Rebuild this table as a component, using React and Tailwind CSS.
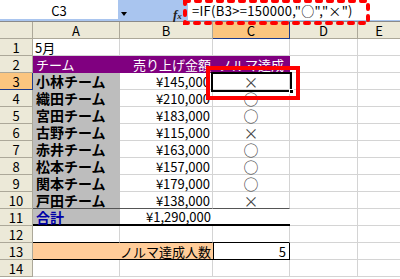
const teams = [
  ['小林チーム', '¥145,000', '×'],
  ['織田チーム', '¥210,000', '○'],
  ['宮田チーム', '¥183,000', '○'],
  ['古野チーム', '¥115,000', '×'],
  ['赤井チーム', '¥163,000', '○'],
  ['松本チーム', '¥157,000', '○'],
  ['関本チーム', '¥179,000', '○'],
  ['戸田チーム', '¥138,000', '×'],
];

const RowHead = ({ n, active }) => (
  <div
    className={`w-[33px] shrink-0 h-full flex items-center justify-center border-r border-b text-[13px] ${
      active ? 'bg-[#fbc57f] border-[#1c3a8c]' : 'bg-[#ece9d8] border-[#aca899]'
    }`}
  >
    {n}
  </div>
);

// plain empty D / E cells
const Tail = () => (
  <>
    <div className="w-[68px] shrink-0 h-full border-r border-b border-[#d4d4d4]" />
    <div className="flex-1 h-full border-b border-[#d4d4d4]" />
  </>
);

const App = () => {
  return (
    <div className="relative w-[400px] h-[279px] overflow-hidden bg-white text-black font-['Noto_Sans_CJK_JP',sans-serif] leading-none">
      {/* formula bar */}
      <div className="h-[22px] flex items-start bg-[#a9c5ef] border-b border-[#8a8a8a]">
        <div className="w-[118px] h-[19px] bg-white flex items-center justify-center text-[13px] pt-[2px]">C3</div>
        <div className="w-[70px] h-full flex items-start pt-[12px]">
          <div className="ml-[3px] w-0 h-0 border-x-[3.5px] border-x-transparent border-t-[4px] border-t-black" />
          <div className="ml-[46px] -mt-[4px] font-['Liberation_Serif',serif] italic font-bold text-[13px] text-[#222]">
            f<span className="text-[9px]">x</span>
          </div>
        </div>
        <div className="flex-1 h-[20px] bg-white flex items-center pl-[4px] text-[13px] tracking-[0.3px] pt-[1px]">
          =IF(B3&gt;=150000,"○","×")
        </div>
      </div>

      {/* column headers */}
      <div className="flex h-[17px] text-[13px]">
        <div className="w-[33px] shrink-0 h-full bg-[#ece9d8] border-r border-b border-[#aca899]" />
        <div className="w-[87px] shrink-0 h-full bg-[#ece9d8] border-r border-b border-[#aca899] flex items-center justify-center">A</div>
        <div className="w-[93px] shrink-0 h-full bg-[#ece9d8] border-r border-b border-[#aca899] flex items-center justify-center">B</div>
        <div className="w-[77px] shrink-0 h-full bg-[#fbc57f] border-r border-b border-[#1c3a8c] flex items-center justify-center">C</div>
        <div className="w-[68px] shrink-0 h-full bg-[#ece9d8] border-r border-b border-[#aca899] flex items-center justify-center">D</div>
        <div className="flex-1 h-full bg-[#ece9d8] border-b border-[#aca899] flex items-center justify-center">E</div>
      </div>

      {/* row 1 */}
      <div className="flex h-[17px]">
        <RowHead n={1} />
        <div className="w-[87px] shrink-0 h-full border-r border-b border-[#d4d4d4] flex items-center pl-[2px] text-[13px]">5月</div>
        <div className="w-[93px] shrink-0 h-full border-r border-b border-[#d4d4d4]" />
        <div className="w-[77px] shrink-0 h-full border-r border-b border-[#d4d4d4]" />
        <Tail />
      </div>

      {/* row 2 */}
      <div className="flex h-[17px]">
        <RowHead n={2} />
        <div className="w-[257px] shrink-0 h-full bg-[#800080] text-white text-[13px] flex items-center">
          <div className="w-[87px] pl-[3px]">チーム</div>
          <div className="w-[93px] text-right pr-[2px]">売り上げ金額</div>
          <div className="w-[77px] text-center">ノルマ達成</div>
        </div>
        <Tail />
      </div>

      {/* rows 3-10 */}
      {teams.map(([name, amount, mark], i) => {
        const last = i === teams.length - 1;
        return (
          <div key={name} className="flex h-[17px]">
            <RowHead n={i + 3} active={i === 0} />
            <div
              className={`w-[87px] shrink-0 h-full bg-[#bdbdbd] border-b flex items-center pl-[3px] text-[14px] font-bold ${
                last ? 'border-[#555]' : 'border-[#bdbdbd]'
              }`}
            >
              {name}
            </div>
            <div
              className={`w-[93px] shrink-0 h-full border-r border-b flex items-center justify-end pr-[2px] text-[13px] ${
                last ? 'border-b-[#555] border-r-[#d4d4d4]' : 'border-[#d4d4d4]'
              }`}
            >
              {amount}
            </div>
            <div
              className={`w-[77px] shrink-0 h-full border-r border-b flex items-center justify-center text-[15px] text-[#444] ${
                last ? 'border-b-[#555] border-r-[#d4d4d4]' : 'border-[#d4d4d4]'
              }`}
            >
              {mark}
            </div>
            <Tail />
          </div>
        );
      })}

      {/* row 11 total */}
      <div className="flex h-[17px]">
        <RowHead n={11} />
        <div className="w-[87px] shrink-0 h-full bg-[#bdbdbd] border-b-2 border-black flex items-center pl-[3px] text-[14px] font-bold text-[#0000a8]">合計</div>
        <div className="w-[93px] shrink-0 h-full border-b-2 border-black flex items-center justify-end pr-[2px] text-[13px]">¥1,290,000</div>
        <div className="w-[77px] shrink-0 h-full border-b-2 border-black" />
        <Tail />
      </div>

      {/* row 12 */}
      <div className="flex h-[17px]">
        <RowHead n={12} />
        <div className="w-[87px] shrink-0 h-full border-r border-r-[#d4d4d4] border-b border-b-black" />
        <div className="w-[93px] shrink-0 h-full border-r border-r-[#d4d4d4] border-b border-b-black" />
        <div className="w-[77px] shrink-0 h-full border-r border-r-[#d4d4d4] border-b border-b-black" />
        <Tail />
      </div>

      {/* row 13 */}
      <div className="flex h-[17px]">
        <RowHead n={13} />
        <div className="w-[180px] shrink-0 h-full bg-[#ffcc99] border-b border-black flex items-center justify-end pr-[2px] text-[13px]">ノルマ達成人数</div>
        <div className="w-[77px] shrink-0 h-full border-x border-b border-black flex items-center justify-end pr-[3px] text-[13px]">5</div>
        <Tail />
      </div>

      {/* row 14 */}
      <div className="flex h-[17px]">
        <RowHead n={14} />
        <div className="w-[87px] shrink-0 h-full border-r border-b border-[#d4d4d4]" />
        <div className="w-[93px] shrink-0 h-full border-r border-b border-[#d4d4d4]" />
        <div className="w-[77px] shrink-0 h-full border-r border-b border-[#d4d4d4]" />
        <Tail />
      </div>

      {/* active cell C3 */}
      <div className="absolute left-[211px] top-[72px] w-[81px] h-[20px] border-2 border-black">
        <div className="absolute -right-[4px] -bottom-[4px] w-[5px] h-[5px] bg-black border border-white" />
      </div>

      {/* red highlight on C3 */}
      <div className="absolute left-[206px] top-[66px] w-[94px] h-[34px] border-4 border-[#ff0000]" />

      {/* dashed highlight on formula */}
      <svg className="absolute left-0 top-0" width="400" height="30">
        <rect
          x="185"
          y="1"
          width="183"
          height="22"
          fill="none"
          stroke="#ff0000"
          strokeWidth="4"
          strokeDasharray="4 7"
          strokeLinecap="round"
        />
      </svg>
    </div>
  );
};

export default App;
